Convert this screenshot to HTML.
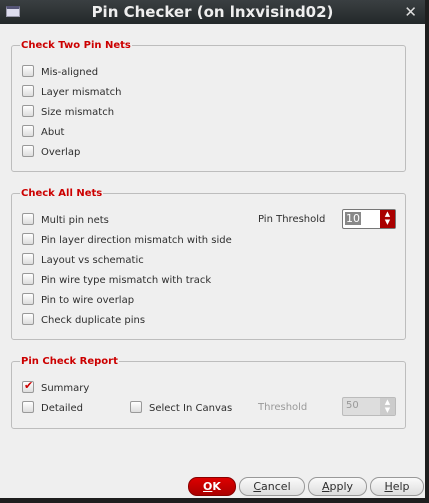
<!DOCTYPE html>
<html><head><style>
*{margin:0;padding:0;box-sizing:border-box}
body{width:429px;height:503px;background:#1e1e1e;position:relative;overflow:hidden;font-family:"DejaVu Sans","Liberation Sans",sans-serif;font-size:10px;color:#2e2e2e}
#win{position:absolute;left:0;top:0;width:425px;height:498px;background:#efefef}
#tb{position:absolute;left:0;top:0;width:425px;height:24px;background:linear-gradient(#3a3f42,#23282a);color:#eee;font-weight:bold;font-size:15px;text-align:center;line-height:24px}
#ico{position:absolute;left:6px;top:6px;width:14px;height:11px;background:#dde;border:1px solid #99a;border-top:3px solid #557}
#x{position:absolute;right:8px;top:0;font-size:15px;color:#ddd}
.g{position:absolute;left:11px;width:395px;border:1px solid #bdbdbd;border-radius:3px}
.gt{position:absolute;left:8px;top:-6px;background:#efefef;padding:0 1px;color:#c00;font-weight:bold;font-size:10px;line-height:12px}
.r{position:absolute;left:22px;height:14px;line-height:13px}
.cb{display:inline-block;width:12px;height:12px;border:1px solid #999;border-radius:2px;background:linear-gradient(#fff,#ddd);vertical-align:-2px;margin-right:7px;position:relative}
.btn{position:absolute;top:477px;height:19px;border:1px solid #999;border-radius:9px;background:linear-gradient(#fafafa,#ddd);text-align:center;line-height:17px;font-size:11px}
.spin{position:absolute;height:20px;border:1px solid #888;border-radius:2px;background:#fff}
</style></head><body>
<div id="win">
<div id="tb"><div id="ico"></div>Pin Checker (on lnxvisind02)<span id="x">✕</span></div>
<div class="g" style="top:45px;height:127px"><span class="gt">Check Two Pin Nets</span></div>
<div class="r" style="top:65px"><span class="cb"></span>Mis-aligned</div>
<div class="r" style="top:85px"><span class="cb"></span>Layer mismatch</div>
<div class="r" style="top:105px"><span class="cb"></span>Size mismatch</div>
<div class="r" style="top:125px"><span class="cb"></span>Abut</div>
<div class="r" style="top:145px"><span class="cb"></span>Overlap</div>
<div class="g" style="top:193px;height:147px"><span class="gt">Check All Nets</span></div>
<div class="r" style="top:213px"><span class="cb"></span>Multi pin nets</div>
<div class="r" style="top:213px;left:258px">Pin Threshold</div>
<div class="spin" style="left:342px;top:209px;width:54px;border-color:#777"><span style="position:absolute;left:2px;top:2px;background:#888;color:#fff;line-height:13px;padding:0 1px;font-size:11px">10</span><span style="position:absolute;right:0;top:0;width:15px;height:18px;background:#a00;color:#fff;font-size:7px;line-height:8px;text-align:center">▲<br>▼</span></div>
<div class="r" style="top:233px"><span class="cb"></span>Pin layer direction mismatch with side</div>
<div class="r" style="top:253px"><span class="cb"></span>Layout vs schematic</div>
<div class="r" style="top:273px"><span class="cb"></span>Pin wire type mismatch with track</div>
<div class="r" style="top:293px"><span class="cb"></span>Pin to wire overlap</div>
<div class="r" style="top:313px"><span class="cb"></span>Check duplicate pins</div>
<div class="g" style="top:361px;height:68px"><span class="gt">Pin Check Report</span></div>
<div class="r" style="top:381px"><span class="cb"><span style="position:absolute;left:1px;top:-3px;color:#c00;font-size:11px">✔</span></span>Summary</div>
<div class="r" style="top:401px"><span class="cb"></span>Detailed</div>
<div class="r" style="top:401px;left:130px"><span class="cb"></span>Select In Canvas</div>
<div class="r" style="top:401px;left:258px;color:#999">Threshold</div>
<div class="spin" style="left:342px;top:397px;width:54px;height:19px;background:#ddd;border-color:#bbb;color:#999"><span style="position:absolute;left:3px;top:2px">50</span><span style="position:absolute;right:0;top:0;width:15px;height:17px;background:#ccc;color:#fff;font-size:7px;line-height:8px;text-align:center">▲<br>▼</span></div>
<div class="btn" style="left:188px;width:48px;background:linear-gradient(#d00,#a00);border-color:#800;color:#fff;font-weight:bold"><u>O</u>K</div>
<div class="btn" style="left:239px;width:66px"><u>C</u>ancel</div>
<div class="btn" style="left:308px;width:59px"><u>A</u>pply</div>
<div class="btn" style="left:370px;width:54px"><u>H</u>elp</div>
</div>
</body></html>
